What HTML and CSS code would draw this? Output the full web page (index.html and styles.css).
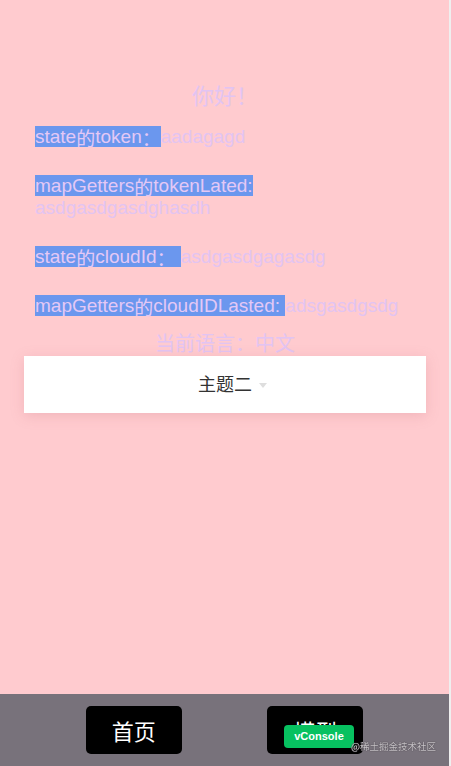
FILE: index.html
```html
<!DOCTYPE html>
<html lang="zh-CN">
<head>
<meta charset="utf-8">
<title>demo</title>
<link rel="stylesheet" href="styles.css">
</head>
<body>
<div class="page">
  <h1 class="hello">你好！</h1>
  <div class="rows">
    <p class="row"><span class="sel">state<span class="cjk">的</span>token<span class="cjk">：</span></span>aadagagd</p>
    <p class="row"><span class="sel">mapGetters<span class="cjk">的</span>tokenLated:</span> asdgasdgasdghasdh</p>
    <p class="row"><span class="sel">state<span class="cjk">的</span>cloudId<span class="cjk">：</span>&nbsp;</span>asdgasdgagasdg</p>
    <p class="row"><span class="sel">mapGetters<span class="cjk">的</span>cloudIDLasted: </span>adsgasdgsdg</p>
  </div>
  <p class="lang">当前语言：中文</p>
  <div class="picker"><span class="picker-text">主题二</span></div>
</div>
<nav class="tabbar">
  <button class="tab">首页</button>
  <button class="tab">模型</button>
</nav>
<div class="vconsole">vConsole</div>
<div class="watermark">@稀土掘金技术社区</div>
</body>
</html>
```
FILE: styles.css
```css
html {
  background: #efefef;
  height: 100%;
}
body {
  margin: 0;
  width: 449px;
  min-height: 766px;
  background: #ffcbcf;
  font-family: "Liberation Sans", "Noto Sans CJK SC", sans-serif;
  color: #e2c4f2;
}
.page {
  padding: 82px 23px 0 24px;
  display: flex;
  flex-direction: column;
}
.hello {
  margin: 0;
  font-size: 22px;
  font-weight: normal;
  line-height: 30px;
  text-align: center;
}
.rows {
  display: flex;
  flex-direction: column;
  gap: 27px;
  padding: 14px 12px 0 11px;
}
.row {
  margin: 0;
  font-size: 19px;
  line-height: 22px;
}
.sel {
  background: #6b97ee;
  color: #e4c8f5;
}
.cjk {
  line-height: 14px;
  vertical-align: -3px;
}
.lang {
  margin: 15px 0 0;
  font-size: 20px;
  line-height: 24px;
  text-align: center;
}
.picker {
  height: 57px;
  background: #fff;
  box-shadow: 0 3px 12px rgba(200, 120, 130, 0.25);
  display: flex;
  align-items: center;
  justify-content: center;
}
.picker-text {
  position: relative;
  font-size: 18px;
  color: #333;
  line-height: 24px;
}
.picker-text::after {
  content: "";
  position: absolute;
  left: calc(100% + 7px);
  top: 10px;
  border-left: 4px solid transparent;
  border-right: 4px solid transparent;
  border-top: 5px solid #dedede;
}
.tabbar {
  position: fixed;
  left: 0;
  bottom: 0;
  width: 449px;
  height: 72px;
  box-sizing: border-box;
  padding: 12px 0;
  background: #78727b;
  display: flex;
  justify-content: space-evenly;
}
.tab {
  width: 96px;
  height: 48px;
  border: 0;
  border-radius: 5px;
  background: #000;
  color: #fff;
  font-family: "Liberation Sans", "Noto Sans CJK SC", sans-serif;
  font-size: 22px;
  padding: 0;
}
.vconsole {
  position: fixed;
  right: 97px;
  bottom: 18px;
  width: 70px;
  height: 23px;
  border-radius: 4px;
  background: #07c160;
  color: #fff;
  font-family: "Liberation Sans", sans-serif;
  font-size: 11px;
  font-weight: bold;
  line-height: 23px;
  text-align: center;
}
.watermark {
  position: fixed;
  right: 15px;
  bottom: 13px;
  font-family: "Noto Sans CJK SC", sans-serif;
  font-size: 9.5px;
  line-height: 13px;
  color: #c8c4c8;
  text-shadow: 0 0 1px #4a454c, 0 0 1px #4a454c;
}
```
